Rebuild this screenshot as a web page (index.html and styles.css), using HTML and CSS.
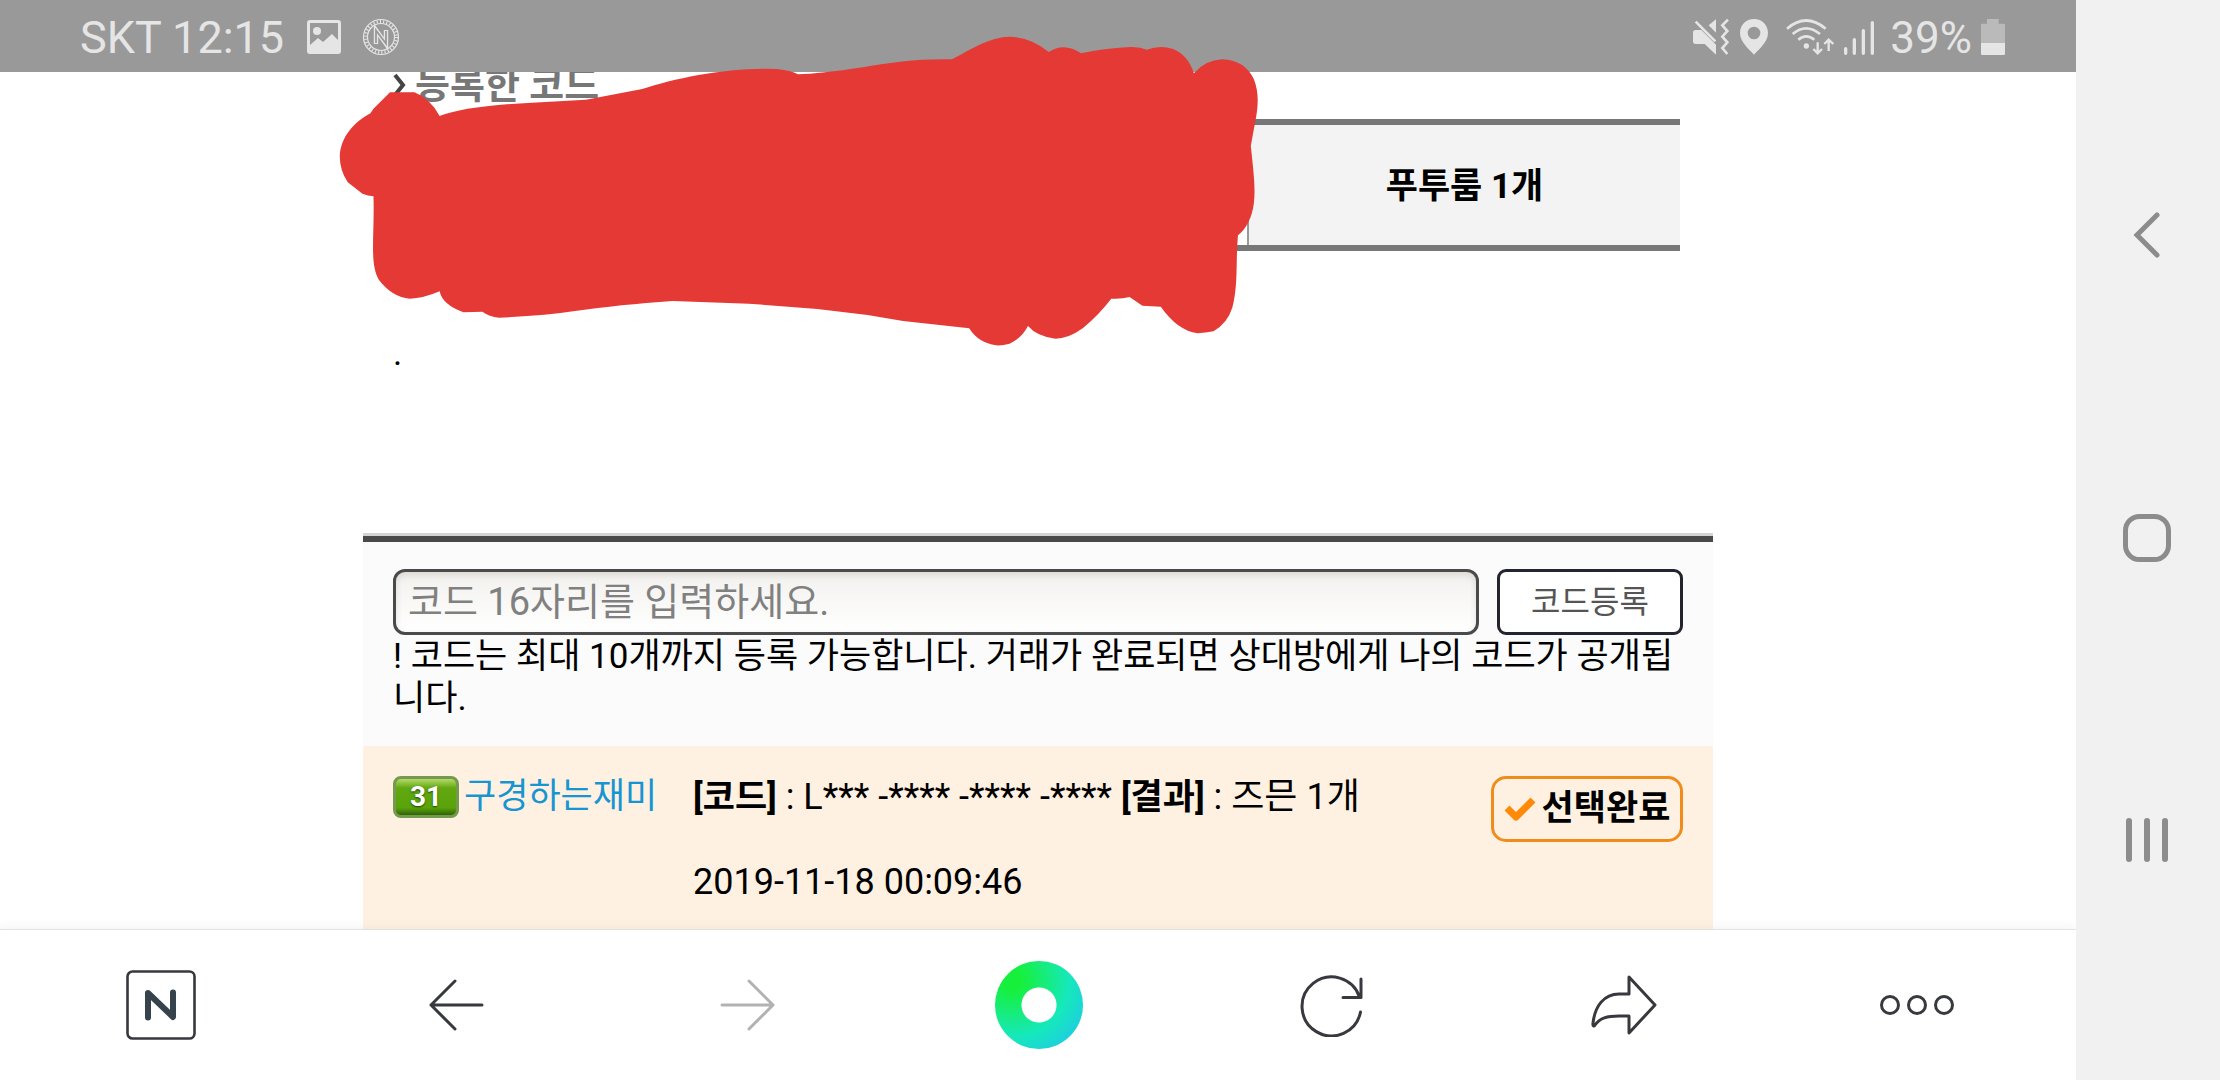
FILE: index.html
```html
<!DOCTYPE html>
<html lang="ko">
<head>
<meta charset="utf-8">
<meta name="viewport" content="width=device-width, initial-scale=1">
<title>등록한 코드</title>
<link rel="stylesheet" href="styles.css">
</head>
<body>
<div class="device">
  <div class="screen">
    <header class="status">
      <span class="status-text status-clock">SKT 12:15</span>
      <svg class="status-picture" width="36" height="36" viewBox="0 0 36 36" aria-hidden="true">
        <path fill="#e5e5e5" fill-rule="evenodd" d="M4 1H32Q35 1 35 4V32Q35 35 32 35H4Q1 35 1 32V4Q1 1 4 1ZM4 4V26L12 19L17 23L26 15L32 21V4Z"/>
        <circle cx="11" cy="12" r="4" fill="#e5e5e5"/>
      </svg>
      <svg class="status-coin" width="38" height="38" viewBox="0 0 38 38" fill="none" stroke="#e5e5e5" aria-hidden="true">
        <circle cx="19" cy="19" r="17.5" stroke-width="1.2"/>
        <circle cx="19" cy="19" r="15.5" stroke-width="3" stroke-dasharray="1.1 2.15"/>
        <circle cx="19" cy="19" r="13.5" stroke-width="1.2"/>
        <path d="M14 26V12L24 26V12" stroke-width="4.4"/>
        <path d="M14 25V12.500L24 25.500V13" stroke="#999" stroke-width="1.8"/>
      </svg>
      <div class="status-right">
        <svg width="38" height="38" viewBox="96 54 114 114" aria-hidden="true">
          <path fill="#e5e5e5" d="M107 90H124L168 134V164L134 132H107Q99 132 99 124V98Q99 90 107 90ZM146 76L168 58V98Z"/>
          <path fill="none" stroke="#e5e5e5" stroke-width="8" d="M107 65L166 124M204 59L187 76L202 93L187 110L202 127L187 144L202 162"/>
        </svg>
        <svg width="32" height="38" viewBox="234 54 96 114" aria-hidden="true">
          <path fill="#e5e5e5" fill-rule="evenodd" d="M282 57C258 57 240 75 240 99C240 125 265 146 282 164C299 146 324 125 324 99C324 75 306 57 282 57ZM282 80A19 19 0 1 1 282 118A19 19 0 1 1 282 80Z"/>
        </svg>
        <svg width="58" height="38" viewBox="354 54 174 114" fill="none" stroke="#e5e5e5" stroke-width="8" aria-hidden="true">
          <path d="M381 86Q438 37 497 86M398 102Q438 68 480 102M415 119Q438 99 463 119"/>
          <circle cx="439" cy="138" r="8" fill="#e5e5e5" stroke="none"/>
          <path stroke-width="7" d="M473 127V160M460 147L473 160L486 147M506 153V119M493 132L506 119L520 132"/>
        </svg>
        <svg width="32" height="38" viewBox="552 54 96 114" fill="none" stroke="#e5e5e5" stroke-width="10" stroke-linecap="round" aria-hidden="true">
          <path d="M557 146V160M583 119V160M610 92V160M637 68V160"/>
        </svg>
        <span class="status-text status-percent">39%</span>
        <svg width="26" height="38" viewBox="963 54 78 114" aria-hidden="true">
          <path fill="#bababa" d="M984 57H1019V71H1034Q1038 71 1038 75V129H966V75Q966 71 970 71H984Z"/>
          <path fill="#e5e5e5" d="M966 129H1038V161Q1038 165 1034 165H970Q966 165 966 161Z"/>
        </svg>
      </div>
    </header>

    <main class="page">
      <div class="column">
        <section class="registered">
          <h2 class="heading">
            <svg width="14" height="24" viewBox="0 0 14 24" fill="none" stroke="#444" stroke-width="4" aria-hidden="true"><path d="M2 2L10 12L2 22"/></svg>
            등록한 코드
          </h2>
          <table class="codes">
            <tbody><tr><td class="code-cell"></td><th class="result-cell" scope="row">푸투룸 1개</th></tr></tbody>
          </table>
          <p class="note">.</p>
          <svg class="scribble" width="960" height="340" viewBox="0 0 1568 1020" preserveAspectRatio="none" aria-hidden="true">
            <path fill="#e53935" d="M98 217H138Q164 236 179 288Q220 258 330 248L418 239L510 207C560 176 640 146 710 146Q750 146 764 163Q800 162 870 142C920 126 960 116 1016 118C1050 84 1080 50 1110 50Q1145 52 1174 96Q1199 66 1227 100Q1270 83 1308 81Q1323 80 1334 89Q1355 74 1376 86Q1402 105 1411 160Q1430 120 1457 118Q1494 120 1509 178C1522 240 1512 290 1504 378C1508 450 1512 500 1509 550Q1504 616 1483 646C1479 720 1484 790 1474 862Q1466 910 1443 934Q1430 939 1417 940Q1384 931 1357 860L1327 857L1306 831Q1292 838 1276 836Q1257 882 1230 924Q1207 955 1185 956Q1155 950 1140 918Q1130 954 1110 971Q1098 977 1088 976Q1059 969 1044 925L936 903L878 885L796 867L684 851L560 843C500 851 450 860 400 873Q350 887 276 893Q260 890 249 875L218 877Q184 855 179 814Q153 835 130 836Q102 832 80 780C64 730 73 650 71 529Q62 528 53 521L29 487Q16 450 16 410C17 350 40 306 66 280L71 266Z"/>
          </svg>
        </section>

        <section class="entry">
          <form class="entry-form">
            <input class="code-input" type="text" placeholder="코드 16자리를 입력하세요." aria-label="코드 16자리">
            <button class="submit" type="button">코드등록</button>
          </form>
          <p class="hint">! 코드는 최대 10개까지 등록 가능합니다. 거래가 완료되면 상대방에게 나의 코드가 공개됩니다.</p>
        </section>

        <article class="trade">
          <div class="user"><span class="level">31</span><a class="name" href="#">구경하는재미</a></div>
          <div class="detail">
            <p class="line"><b class="label">[코드]</b> : L*** -**** -**** -**** <b class="label">[결과]</b> : 즈믄 1개</p>
            <p class="line"><time datetime="2019-11-18T00:09:46">2019-11-18 00:09:46</time></p>
          </div>
          <button class="selected" type="button">
            <svg width="32" height="26" viewBox="0 0 32 26" fill="none" stroke="#ff8a0a" stroke-width="7" aria-hidden="true"><path stroke-linejoin="round" d="M3 12L12 21L29 4"/></svg>
            선택완료
          </button>
        </article>
      </div>
    </main>

    <nav class="toolbar">
      <button class="tool" type="button" aria-label="네이버 홈">
        <svg width="70" height="70" viewBox="0 0 70 70" fill="none"><rect x="1.500" y="1.500" width="67" height="67" rx="5" stroke="#37393f" stroke-width="2.600"/><path d="M22 47.500V23L47 47V22.500" stroke="#36434c" stroke-width="6" stroke-linecap="round" stroke-linejoin="round"/></svg>
      </button>
      <button class="tool" type="button" aria-label="뒤로">
        <svg width="60" height="52" viewBox="-5 0 60 52" fill="none" stroke="#37393f" stroke-width="3" stroke-linecap="round" stroke-linejoin="round"><path d="M26 2L2 26L26 50M2 26H53"/></svg>
      </button>
      <button class="tool" type="button" aria-label="앞으로" disabled>
        <svg width="58" height="52" viewBox="-2 0 58 52" fill="none" stroke="#b2b2b2" stroke-width="3" stroke-linecap="round" stroke-linejoin="round"><path d="M30 2L54 26L30 50M54 26H3"/></svg>
      </button>
      <button class="tool" type="button" aria-label="그린닷"><span class="green-dot"></span></button>
      <button class="tool" type="button" aria-label="새로고침">
        <svg width="64" height="64" viewBox="-1 -1 64 64" fill="none" stroke="#37393f" stroke-width="3" stroke-linecap="round" stroke-linejoin="round"><path d="M59.500 38A29.500 29.500 0 1 1 58.500 23M60 5V23.500H42"/></svg>
      </button>
      <button class="tool" type="button" aria-label="공유">
        <svg width="66" height="60" viewBox="0 0 66 60" fill="none" stroke="#37393f" stroke-width="3" stroke-linecap="round" stroke-linejoin="round"><path d="M38 2L64 30L38 58V41H28C16 41 9 43 4 50C3 52 1.500 51 2 48C4 31 13 19 28 19H38Z"/></svg>
      </button>
      <button class="tool" type="button" aria-label="더보기">
        <svg width="74" height="22" viewBox="0 0 74 22" fill="none" stroke="#37393f" stroke-width="3"><circle cx="10" cy="11" r="8.500"/><circle cx="37" cy="11" r="8.500"/><circle cx="64" cy="11" r="8.500"/></svg>
      </button>
    </nav>
  </div>

  <aside class="system-nav">
    <button class="system-button" type="button" aria-label="이전">
      <svg width="28" height="46" viewBox="0 0 28 46" fill="none" stroke="#8c8c8c" stroke-width="5" stroke-linecap="round"><path d="M24 3L4 23L24 43"/></svg>
    </button>
    <button class="system-button" type="button" aria-label="홈">
      <svg width="48" height="48" viewBox="0 0 48 48" fill="none" stroke="#8c8c8c" stroke-width="5"><rect x="2.500" y="2.500" width="43" height="43" rx="14"/></svg>
    </button>
    <button class="system-button" type="button" aria-label="최근 앱">
      <svg width="42" height="46" viewBox="0 0 42 46" fill="none" stroke="#8c8c8c" stroke-width="6" stroke-linecap="round"><path d="M3 4V42M21 4V42M39 4V42"/></svg>
    </button>
  </aside>
</div>
</body>
</html>
```
FILE: styles.css
```css
* {
  box-sizing: border-box;
}

body {
  margin: 0;
  background: #fff;
  color: #000;
  font: 35px/42px Roboto, "Noto Sans CJK KR", sans-serif;
}

p,
h2 {
  margin: 0;
}

button {
  padding: 0;
  border: 0;
  background: none;
  font: inherit;
  color: inherit;
}

svg {
  display: block;
  flex: none;
}

.device {
  display: flex;
  height: 100vh;
  overflow: hidden;
}

.screen {
  flex: 1;
  min-width: 0;
  display: flex;
  flex-direction: column;
}

.status {
  position: relative;
  z-index: 1;
  flex: none;
  display: flex;
  align-items: center;
  height: 72px;
  padding: 4px 70px 2px 80px;
  background: #999;
}

.status-text {
  padding-top: 2px;
  font-size: 44px;
  line-height: 64px;
  color: #e5e5e5;
}

.status-clock {
  font-size: 45px;
}

.status-picture {
  margin-left: 22px;
}

.status-coin {
  margin-left: 20px;
}

.status-right {
  display: flex;
  align-items: center;
  gap: 8px;
  margin-left: auto;
}

.status-percent {
  margin-left: 6px;
}

.page {
  flex: 1;
  min-height: 0;
  display: flex;
  justify-content: center;
}

.column {
  display: flex;
  flex-direction: column;
  width: 100%;
  max-width: 1350px;
}

.registered {
  position: relative;
  flex: none;
  height: 464px;
  padding: 0 33px 0 30px;
}

.heading {
  display: flex;
  align-items: center;
  gap: 8px;
  margin-top: -8px;
  font-size: 38px;
  font-weight: 700;
  line-height: 42px;
  color: #777;
}

.codes {
  width: 100%;
  margin-top: 13px;
  border-collapse: collapse;
  table-layout: fixed;
  border-top: 6px solid #777;
  border-bottom: 6px solid #777;
}

.code-cell {
  width: 855px;
}

.result-cell {
  height: 126px;
  padding: 4px 0 0;
  border-left: 2px solid #999;
  background: #f3f3f3;
  font-weight: 700;
}

.note {
  margin-top: 82px;
}

/* Marker drawn over the registered codes */
.scribble {
  position: absolute;
  z-index: 2;
  top: -52px;
  left: -33px;
}

.entry {
  flex: none;
  padding: 27px 30px 26px;
  border-top: 6px solid #4a4a4a;
  box-shadow: 0 -3px 0 #d4d4d4;
  background: #fbfbfb;
}

.entry-form {
  display: flex;
  gap: 18px;
  margin-bottom: 1px;
}

.code-input {
  flex: 1;
  min-width: 0;
  height: 66px;
  padding: 0 12px;
  border: 3px solid #4a4a4a;
  border-radius: 12px;
  background: linear-gradient(#f2f1ee, #fff);
  box-shadow: inset 0 3px 6px rgba(80, 70, 60, 0.15);
  font: inherit;
  font-size: 38px;
}

.code-input::placeholder {
  color: #808080;
  opacity: 1;
}

.submit {
  width: 186px;
  border: 3px solid #22252d;
  border-radius: 9px;
  background: #fff;
  font-size: 32px;
  color: #555;
}

.hint {
  word-break: break-all;
}

.trade {
  flex: 1;
  display: grid;
  grid-template-columns: 300px 1fr auto;
  align-items: start;
  padding: 30px 30px 0;
  background: #fff1e2;
}

.user {
  display: flex;
  gap: 5px;
}

.level {
  width: 66px;
  height: 42px;
  border: 3px solid #75994f;
  border-radius: 8px;
  background: linear-gradient(#b5d96a, #62a811 25%, #5aa30a 80%, #2f6208);
  font-size: 28px;
  font-weight: 700;
  line-height: 36px;
  text-align: center;
  color: #fff;
  text-shadow: 0 1px 2px #1d3d00;
}

.name {
  color: #1795d2;
  text-decoration: none;
}

.detail {
  display: grid;
  gap: 42px;
  font-size: 36px;
}

.label {
  font-size: 35px;
}

.selected {
  display: flex;
  align-items: center;
  justify-content: center;
  gap: 6px;
  width: 192px;
  height: 66px;
  border: 3px solid #f08c1c;
  border-radius: 15px;
  font-weight: 700;
}

.toolbar {
  position: relative;
  flex: none;
  display: flex;
  height: 151px;
  padding: 0 13px 0 15px;
  border-top: 1px solid #e0e2e5;
  background: #fff;
  box-shadow: 0 -2px 10px rgba(40, 50, 80, 0.06);
}

.tool {
  flex: 1;
  display: flex;
  align-items: center;
  justify-content: center;
}

.green-dot {
  width: 88px;
  height: 88px;
  border: 0;
  border-radius: 50%;
  background:
    radial-gradient(circle, #fff 17px, transparent 18px),
    radial-gradient(circle at 20% 22%, #16f03c 10%, #16e8bd 58%, #23bdf5 100%);
}

.system-nav {
  position: relative;
  flex: none;
  display: flex;
  flex-direction: column;
  align-items: center;
  justify-content: space-between;
  width: 144px;
  padding: 212px 2px 217px 0;
  background: #f1f1f1;
}
```
